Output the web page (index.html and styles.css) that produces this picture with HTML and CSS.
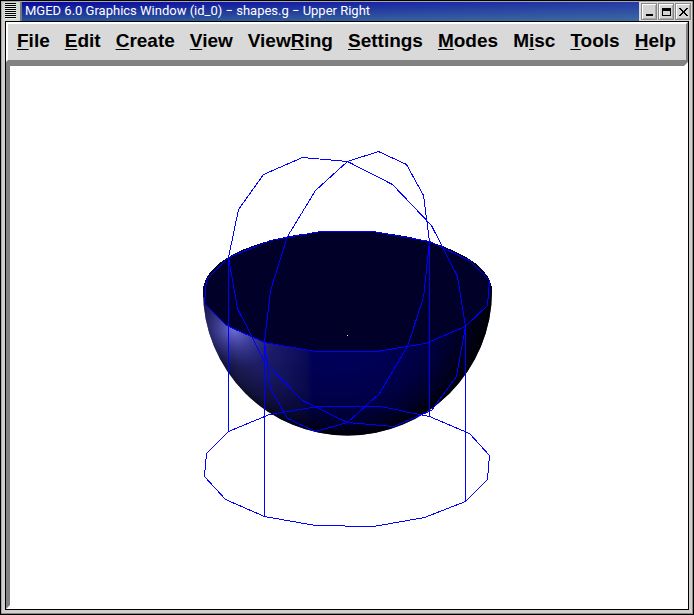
FILE: index.html
```html
<!DOCTYPE html>
<html lang="en">
<head>
<meta charset="utf-8">
<title>MGED 6.0 Graphics Window</title>
<link rel="stylesheet" href="styles.css">
</head>
<body>
<div class="window">
  <header class="titlebar">
    <button class="window-menu" aria-label="Window menu"></button>
    <h1 class="title">MGED 6.0 Graphics Window (id_0) − shapes.g − Upper Right</h1>
    <div class="controls">
      <button class="control" aria-label="Minimize"><svg viewBox="0 0 11 11"><path d="M2 8h7v2H2z"/></svg></button>
      <button class="control" aria-label="Maximize"><svg viewBox="0 0 11 11"><path fill-rule="evenodd" d="M1 2h9v8H1zM2 5v4h7V5z"/></svg></button>
      <button class="control" aria-label="Close"><svg viewBox="0 0 11 11"><path d="M1 2h2v1h1v1h1v1h1V4h1V3h1V2h2v1H9v1H8v1H7v2h1v1h1v1h1v1H8V9H7V8H6V7H5v1H4v1H3v1H1V9h1V8h1V7h1V5H3V4H2V3H1z"/></svg></button>
    </div>
  </header>
  <main class="client">
    <nav class="menubar">
      <button class="menu"><u>F</u>ile</button>
      <button class="menu"><u>E</u>dit</button>
      <button class="menu"><u>C</u>reate</button>
      <button class="menu"><u>V</u>iew</button>
      <button class="menu">View<u>R</u>ing</button>
      <button class="menu"><u>S</u>ettings</button>
      <button class="menu"><u>M</u>odes</button>
      <button class="menu">M<u>i</u>sc</button>
      <button class="menu"><u>T</u>ools</button>
      <button class="menu"><u>H</u>elp</button>
    </nav>
    <section class="viewport">
      <svg class="scene" viewBox="10 66 674 539" role="img" aria-label="Shaded hemisphere with wireframe solids">
        <defs>
          <linearGradient id="bowl" gradientUnits="userSpaceOnUse" x1="203" y1="0" x2="491" y2="0">
            <stop offset="0" stop-color="#242470"/>
            <stop offset=".12" stop-color="#30308c"/>
            <stop offset=".25" stop-color="#1c1c70"/>
            <stop offset=".36" stop-color="#0a0a58"/>
            <stop offset=".38" stop-color="#00005a"/>
            <stop offset=".62" stop-color="#000058"/>
            <stop offset=".8" stop-color="#000048"/>
            <stop offset="1" stop-color="#000010"/>
          </linearGradient>
          <radialGradient id="shade" gradientUnits="userSpaceOnUse" cx="342" cy="278" r="160">
            <stop offset=".5" stop-color="#000010" stop-opacity="0"/>
            <stop offset=".75" stop-color="#000010" stop-opacity=".2"/>
            <stop offset=".9" stop-color="#000008" stop-opacity=".55"/>
            <stop offset="1" stop-color="#000000"/>
          </radialGradient>
          <radialGradient id="glint" gradientUnits="userSpaceOnUse" cx="0" cy="0" r="1" gradientTransform="translate(234 330) rotate(25) scale(44 36)">
            <stop offset="0" stop-color="#7474e0" stop-opacity=".9"/>
            <stop offset=".45" stop-color="#5050b4" stop-opacity=".55"/>
            <stop offset="1" stop-color="#30308c" stop-opacity="0"/>
          </radialGradient>
          <clipPath id="bowl-clip"><path d="M203 291A144.500 144.500 0 0 0 492 291z"/></clipPath>
        </defs>
        <g clip-path="url(#bowl-clip)">
          <path fill="url(#bowl)" d="M203 291h289v146H203z"/>
          <path fill="url(#shade)" d="M203 291h289v146H203z"/>
          <path fill="url(#glint)" d="M190 285h95v95h-95z"/>
        </g>
        <path class="opening" d="M203 291C203 258 268 231 347 231S492 258 492 291L488 305 465 326 425 343 376 351H315L264 342 226 325 204 303z"/>
        <g class="wire">
          <path d="M228.500 257.500L238.500 209.500 263.500 174.500 302.500 157.500 347.500 161.500 392.500 184.500 431.500 225.500 457.500 276.500 465.500 326.500 456.500 376.500 431.500 410.500 393.500 426.500 347.500 422.500 302.500 400.500 264.500 361.500 237.500 308.500z"/>
          <path d="M347.500 161.500L378.500 151.500 406.500 164.500 423.500 195.500 429.500 241.500 423.500 297.500 407.500 346.500 379.500 393.500 347.500 422.500 315.500 431.500 287.500 418.500 270.500 388.500 264.500 342.500 270.500 290.500 287.500 236.500 315.500 190.500z"/>
          <path d="M228.500 257.500L270.500 240.500 320.500 231.500H373.500L429.500 241.500 469.500 260.500 489.500 280.500 487.500 305.500 465.500 326.500 425.500 343.500 376.500 351.500H315.500L264.500 342.500 226.500 325.500 204.500 303.500 206.500 279.500z"/>
          <path d="M228.500 431.500L269.500 414.500 318.500 406.500H380.500L429.500 416.500 469.500 433.500 489.500 455.500 487.500 479.500 465.500 501.500 424.500 517.500 373.500 526.500 315.500 525.500 264.500 516.500 225.500 499.500 204.500 476.500 206.500 453.500z"/>
          <path d="M228.500 257V432M264.500 342V517M429.500 241V417M465.500 326V502"/>
        </g>
        <path class="center" d="M347 335h1v1h-1z"/>
      </svg>
    </section>
  </main>
</div>
</body>
</html>
```
FILE: styles.css
```css
* { box-sizing: border-box; }

body { margin: 0; font-family: "Liberation Sans", Arial, sans-serif; }

button { margin: 0; padding: 0; border: 0; background: none; font: inherit; color: inherit; }

.window {
  display: flex;
  flex-direction: column;
  height: 100vh;
  border: 1px solid #000;
  background: #d2cfcc;
  box-shadow: inset -1px -1px #8c8888, inset 1px 1px #a8a8a8;
}

.titlebar { display: flex; height: 20px; padding: 1px 1px 0 3px; }

.window-menu {
  width: 18px;
  height: 19px;
  padding: 1px 4px 2px 1px;
  border-right: 2px solid #70787c;
  background: repeating-linear-gradient(#000 0 1px, #e8ece8 1px 2px) content-box, #d6dad4;
}

.title {
  flex: 1;
  min-width: 0;
  margin: 0;
  padding-left: 3px;
  overflow: hidden;
  white-space: nowrap;
  font-family: Roboto, "Liberation Sans", sans-serif;
  font-size: 13px;
  font-weight: 400;
  line-height: 18px;
  color: #fff;
  background:
    linear-gradient(to right, transparent, rgb(90 150 180 / 35%)),
    linear-gradient(#0808a0, #2c5494);
}

.controls { display: flex; gap: 1px; padding: 1px 1px 1px 2px; background: #dcd8dc; }

.control {
  width: 16px;
  height: 17px;
  border: 1px solid #888;
  background: #d4d4d4;
  box-shadow: inset 1px 1px #fff, inset -1px -1px #aaa;
}

.control svg { display: block; width: 11px; height: 11px; margin: 0 auto; shape-rendering: crispEdges; }

.client {
  flex: 1;
  min-height: 0;
  display: flex;
  flex-direction: column;
  margin: 0 4px 4px;
  border: 1px solid #000;
  background: #fff;
}

.menubar {
  display: flex;
  align-items: center;
  gap: 15px;
  height: 40px;
  padding: 0 9px 2px;
  border: 2px solid;
  border-color: #fff #828282 #828282 #fff;
  background: #d9d9d9;
  font-size: 19px;
  font-weight: 700;
  line-height: 20px;
  white-space: nowrap;
}

.menu u { text-decoration-thickness: 1px; text-underline-offset: 2px; text-decoration-skip-ink: none; }

.viewport {
  flex: 1;
  min-height: 0;
  border: 4px solid;
  border-color: #828282 #fff #fff #828282;
}

.scene { display: block; width: 100%; height: 100%; shape-rendering: crispEdges; }
.opening { fill: #000028; }
.wire { fill: none; stroke: #00f; stroke-width: 1px; }
.center { fill: #ffff80; }
```
